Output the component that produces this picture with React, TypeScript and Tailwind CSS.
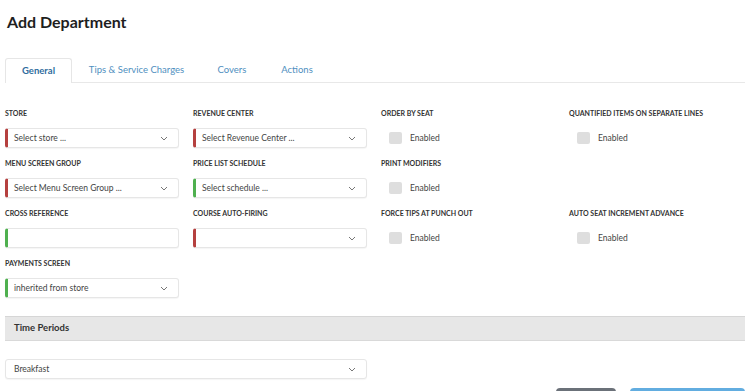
import React from 'react';

type Field =
  | { kind: 'select'; label: string; value: string; accent: 'red' | 'green' | 'none'; chevron?: boolean }
  | { kind: 'check'; label: string }
  | { kind: 'empty' };

const rows: Field[][] = [
  [
    { kind: 'select', label: 'Store', value: 'Select store ...', accent: 'red' },
    { kind: 'select', label: 'Revenue Center', value: 'Select Revenue Center ...', accent: 'red' },
    { kind: 'check', label: 'Order by seat' },
    { kind: 'check', label: 'Quantified items on separate lines' },
  ],
  [
    { kind: 'select', label: 'Menu Screen Group', value: 'Select Menu Screen Group ...', accent: 'red' },
    { kind: 'select', label: 'Price List Schedule', value: 'Select schedule ...', accent: 'green' },
    { kind: 'check', label: 'Print modifiers' },
    { kind: 'empty' },
  ],
  [
    { kind: 'select', label: 'Cross Reference', value: '', accent: 'green', chevron: false },
    { kind: 'select', label: 'Course Auto-Firing', value: '', accent: 'red' },
    { kind: 'check', label: 'Force tips at punch out' },
    { kind: 'check', label: 'Auto seat increment advance' },
  ],
  [
    { kind: 'select', label: 'Payments Screen', value: 'inherited from store', accent: 'green' },
    { kind: 'empty' },
    { kind: 'empty' },
    { kind: 'empty' },
  ],
];

function Chevron() {
  return (
    <svg width="8" height="5" viewBox="0 0 8 5" className="shrink-0">
      <path d="M1 1l3 3 3-3" fill="none" stroke="#777" strokeWidth="1" />
    </svg>
  );
}

function SelectBox({ value, accent, chevron = true }: { value: string; accent: 'red' | 'green' | 'none'; chevron?: boolean }) {
  const accentClass =
    accent === 'red'
      ? 'border-l-[3px] border-l-[#b5403f] pl-[6px]'
      : accent === 'green'
        ? 'border-l-[3px] border-l-[#4fb04f] pl-[6px]'
        : 'pl-[8px]';
  return (
    <div
      className={`flex h-[20px] items-center justify-between rounded-[3px] border border-[#e6e6e6] bg-white pr-[10px] text-[8.5px] text-[#444] shadow-[0_1px_1px_rgba(0,0,0,0.04)] ${accentClass}`}
    >
      <span>{value}</span>
      {chevron && <Chevron />}
    </div>
  );
}

function FieldLabel({ children }: { children: React.ReactNode }) {
  return <div className="h-[10px] text-[7px] font-bold uppercase leading-[10px] text-[#333]">{children}</div>;
}

function Cell({ field }: { field: Field }) {
  if (field.kind === 'empty') return <div className="h-[50px]" />;
  if (field.kind === 'check') {
    return (
      <div className="h-[50px]">
        <FieldLabel>{field.label}</FieldLabel>
        <div className="mt-[10px] flex h-[20px] items-center gap-[8px] pl-[8px]">
          <div className="h-[12px] w-[13px] rounded-[2px] bg-[#dedede]" />
          <span className="text-[8.5px] text-[#444]">Enabled</span>
        </div>
      </div>
    );
  }
  return (
    <div className="h-[50px]">
      <FieldLabel>{field.label}</FieldLabel>
      <div className="mt-[10px]">
        <SelectBox value={field.value} accent={field.accent} chevron={field.chevron} />
      </div>
    </div>
  );
}

const tabs = [
  { name: 'General', w: 'w-[67px]', active: true },
  { name: 'Tips & Service Charges', w: 'w-[129px]', active: false },
  { name: 'Covers', w: 'w-[62px]', active: false },
  { name: 'Actions', w: 'w-[68px]', active: false },
];

export default function App() {
  return (
    <div className="h-[391px] w-[750px] overflow-hidden bg-white font-['Lato',sans-serif] text-[#222]">
      <h1 className="px-[7px] pt-[12px] text-[16px] font-bold leading-[20px] text-[#1e1e1e]">Add Department</h1>

      <div className="mx-[5px] mt-[26px] flex h-[25px] border-b border-[#e8e8e8]">
        {tabs.map((t) => (
          <div
            key={t.name}
            className={`${t.w} -mb-px flex h-[25px] items-center justify-center text-[9.5px] ${
              t.active
                ? 'rounded-t-[3px] border border-b-0 border-[#e6e6e6] bg-white font-bold text-[#2f6d9e]'
                : 'text-[#4f8fc0]'
            }`}
          >
            {t.name}
          </div>
        ))}
      </div>

      <div className="mt-[25px] grid grid-cols-[174px_174px_174px_174px] gap-x-[14px] px-[5px]">
        {rows.map((row, i) => row.map((f, j) => <Cell key={`${i}-${j}`} field={f} />))}
      </div>

      <div className="mx-[5px] mt-[8px] flex h-[25px] items-center border-y border-t-[#d6d6d6] border-b-[#d9d9d9] bg-[#e7e7e7] px-[9px] text-[9.5px] font-bold text-[#333]">
        Time Periods
      </div>

      <div className="mt-[18px] w-[367px] pl-[5px]">
        <SelectBox value="Breakfast" accent="none" />
      </div>

      <div className="mr-[5px] mt-[9px] flex justify-end gap-[14px]">
        <div className="h-[24px] w-[60px] rounded-[4px] bg-[#6b7179]" />
        <div className="h-[24px] w-[115px] rounded-[4px] bg-[#62ade0]" />
      </div>
    </div>
  );
}
